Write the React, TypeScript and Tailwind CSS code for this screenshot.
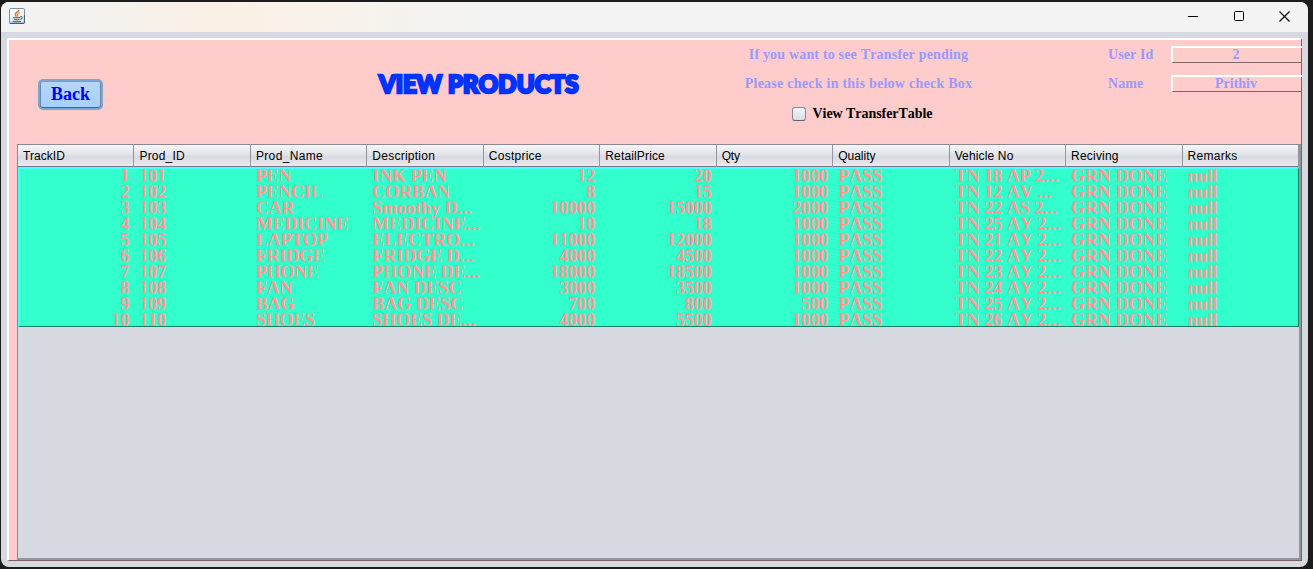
import React from "react";

const columns = [
  { name: "TrackID", right: true, tracking: "tracking-[0.05px]", cell: "tracking-[0px]" },
  { name: "Prod_ID", right: false, tracking: "tracking-[0.2px]", cell: "tracking-[-0.1px]" },
  { name: "Prod_Name", right: false, tracking: "tracking-[0.35px]", cell: "tracking-[-0.2px]" },
  { name: "Description", right: false, tracking: "tracking-[0.25px]", cell: "tracking-[-0.05px]" },
  { name: "Costprice", right: true, tracking: "tracking-[0.25px]", cell: "tracking-[0px]" },
  { name: "RetailPrice", right: true, tracking: "tracking-[0.15px]", cell: "tracking-[0px]" },
  { name: "Qty", right: true, tracking: "tracking-[-0.2px]", cell: "tracking-[0px]" },
  { name: "Quality", right: false, tracking: "tracking-[0px]", cell: "tracking-[0.1px]" },
  { name: "Vehicle No", right: false, tracking: "tracking-[0.15px]", cell: "tracking-[0px]" },
  { name: "Reciving", right: false, tracking: "tracking-[0.2px]", cell: "tracking-[0px]" },
  { name: "Remarks", right: false, tracking: "tracking-[0.3px]", cell: "tracking-[0px]" },
];

const rows = [
  ["1", "101", "PEN", "INK PEN", "12", "20", "1000", "PASS", "TN 18 AP 2...", "GRN DONE", "null"],
  ["2", "102", "PENCIL", "CORBAN", "8", "15", "1000", "PASS", "TN 12 AV ...", "GRN DONE", "null"],
  ["3", "103", "CAR", "Smoothy D...", "10000", "15000", "2000", "PASS", "TN 22 AS 2...", "GRN DONE", "null"],
  ["4", "104", "MEDICINE", "MEDICINE...", "10", "18", "1000", "PASS", "TN 25 AY 2...", "GRN DONE", "null"],
  ["5", "105", "LAPTOP", "ELECTRO...", "11000", "12000", "1000", "PASS", "TN 21 AY 2...", "GRN DONE", "null"],
  ["6", "106", "FRIDGE", "FRIDGE D...", "4000", "4500", "1000", "PASS", "TN 22 AY 2...", "GRN DONE", "null"],
  ["7", "107", "PHONE", "PHONE DE...", "18000", "18500", "1000", "PASS", "TN 23 AY 2...", "GRN DONE", "null"],
  ["8", "108", "FAN", "FAN DESC", "3000", "3500", "1000", "PASS", "TN 24 AY 2...", "GRN DONE", "null"],
  ["9", "109", "BAG", "BAG DESC", "700", "800", "500", "PASS", "TN 25 AY 2...", "GRN DONE", "null"],
  ["10", "110", "SHOES", "SHOES DE...", "4000", "5500", "1000", "PASS", "TN 26 AY 2...", "GRN DONE", "null"],
];

const serif = "font-['Liberation_Serif',serif] font-bold [font-kerning:none]";

function JavaIcon() {
  return (
    <svg width="16" height="16" viewBox="0 0 16 16" fill="none">
      <defs>
        <linearGradient id="tile" x1="0" y1="0" x2="0" y2="1">
          <stop offset="0" stopColor="#ffffff" />
          <stop offset="1" stopColor="#dfe5ea" />
        </linearGradient>
      </defs>
      <rect x="0.5" y="0.5" width="15" height="15" rx="1" fill="url(#tile)" stroke="#7891a5" />
      <path d="M0.8 15.4h14.4M15.4 7v8" stroke="#3f627c" strokeWidth="1.1" />
      <path d="M9.8 2C9.9 4 6.1 4.5 6.3 6.5c.1 1 1 1.3 1.2 2.2" stroke="#e67a24" strokeWidth="1.5" />
      <path d="M10.8 4.5c-1.7.7-2.6 1.3-2.3 2.2.2.6.6.9.1 1.9" stroke="#ee8a35" strokeWidth="1.2" />
      <path d="M4 9.7h7.3M5 11.6h5.5M3.5 13.6h8.500" stroke="#53758f" strokeWidth="1.2" />
      <path d="M11.3 8.7c2.2-.6 2.7 1.9 0 2.8" stroke="#53758f" strokeWidth="1.1" />
    </svg>
  );
}

function TitleBar() {
  return (
    <header className="flex h-[30px] shrink-0 items-center justify-between bg-[linear-gradient(90deg,#f3f3f3_0px,#f4f2ef_90px,#faf1e6_210px,#f9f2e8_290px,#f3f3f3_480px)] pl-2 pr-[18px]">
      <div className="-mt-[2px]"><JavaIcon /></div>
      <div className="-mt-[2px] flex items-center gap-[35px] text-black">
        <svg width="10" height="11" viewBox="0 0 10 11"><path d="M0 5.5h10" stroke="currentColor" /></svg>
        <svg width="11" height="11" viewBox="0 0 11 11" fill="none"><rect x="1.5" y="0.5" width="9" height="9" rx="1" stroke="currentColor" /></svg>
        <svg width="11" height="11" viewBox="0 0 11 11"><path d="M.5.5l10 10M10.5.5l-10 10" stroke="currentColor" strokeWidth="1.1" /></svg>
      </div>
    </header>
  );
}

function Field({ label, value }: { label: string; value: string }) {
  return (
    <div className="flex h-[17px] items-center">
      <span className="w-[63px] text-[14px] leading-[17px] tracking-[0.1px]">{label}</span>
      <div className="-mr-px flex h-[17px] flex-1 items-center justify-center border-b border-l-2 border-t-2 border-b-[#7f6666] border-l-white border-t-white pr-[3px] text-[14px] leading-[14px]">
        {value}
      </div>
    </div>
  );
}

function Header() {
  return (
    <div className={`flex h-[104px] shrink-0 text-[#9999ff] ${serif}`}>
      <div className="w-[370px] pl-[29px] pt-[39px]">
        <button className="flex h-[31px] w-[65px] items-center justify-center rounded-[5px] border-2 border-[#7ba6d1] bg-linear-to-b from-[#b5d6fa] to-[#a5d0ff] pb-px text-[18px] leading-none text-[#0000ff] shadow-[inset_0_1px_0_#8d9ba9,inset_0_-1px_0_#4b6178,inset_1px_0_0_#71879d,inset_-1px_0_0_#71879d]">
          Back
        </button>
      </div>
      <h1 className="flex w-[229px] gap-[6px] whitespace-nowrap pt-[29px] font-['Lato',sans-serif] text-[24px] font-black leading-[30px] text-[#0033ff] [-webkit-text-stroke:2.6px_#0033ff]">
        <span className="tracking-[-0.1px]">VIEW</span> <span className="tracking-[0.1px]">PRODUCTS</span>
      </h1>
      <div className="flex w-[501px] flex-col items-center">
        <p className="mt-[6px] h-[29px] text-[14px] leading-[17px] tracking-[0.18px]">If you want to see Transfer pending</p>
        <p className="h-[30px] text-[14px] leading-[17px] tracking-[0.25px]">Please check in this below check Box</p>
        <label className="ml-[8px] flex items-center gap-[6px] text-[14px] leading-[17px] tracking-[-0.05px] text-black">
          <span className="size-[14px] rounded-[3px] border border-[#858b92] border-b-[#5f656d] bg-linear-to-b from-[#f4f5f7] to-[#d8dbe1]" />
          View TransferTable
        </label>
      </div>
      <div className="-ml-px flex flex-1 flex-col gap-3 pt-[6px]">
        <Field label="User Id" value="2" />
        <Field label="Name" value="Prithiv" />
      </div>
    </div>
  );
}

function CellText({ value }: { value: string }) {
  if (!value.endsWith("...")) return <>{value}</>;
  return (
    <>
      {value.slice(0, -3)}
      <span className="tracking-[0.5px]">...</span>
    </>
  );
}

function ProductTable() {
  return (
    <div className="ml-2 flex flex-1 flex-col border-b-2 border-l border-r-2 border-t border-b-[#98949f] border-l-[#8f8790] border-r-[#98949f] border-t-[#8f8790] bg-[#d6d9e0]">
      <div className="grid h-[22px] w-[1281px] grid-cols-11 border-b border-[#737b87] bg-[linear-gradient(180deg,#f5f6f8_0%,#e2e4e9_45%,#d7dae0_55%,#e8eaee_100%)]">
        {columns.map((c) => (
          <div key={c.name} className={`border-r border-[#92969e] pl-[5px] font-['Liberation_Sans',sans-serif] text-[12px] leading-[22px] text-black ${c.tracking}`}>
            {c.name}
          </div>
        ))}
      </div>
      <div className={`flex h-[160px] w-[1281px] flex-col border-b border-l-2 border-r border-t-2 border-b-[#198066] border-l-[#48ffff] border-r-[#198066] border-t-[#48ffff] bg-[#33ffcc] text-[18px] text-[#ff9999] ${serif}`}>
        <div className="-ml-[2px] -mt-px w-[1281px]">
          {rows.map((r) => (
            <div key={r[0]} className="grid h-4 grid-cols-11">
              {r.map((v, i) => (
                <div key={columns[i].name} className={`whitespace-nowrap px-[5px] leading-4 ${columns[i].cell} ${columns[i].right ? "text-right" : "text-left"}`}>
                  <CellText value={v} />
                </div>
              ))}
            </div>
          ))}
        </div>
      </div>
    </div>
  );
}

export default function App() {
  return (
    <div className="h-[569px] w-[1313px] overflow-hidden bg-[#1c1c1c] pl-px pt-[2px]">
      <div className="flex h-[565px] w-[1307px] flex-col overflow-hidden rounded-lg bg-[#d6d9e0]">
        <TitleBar />
        <main className="m-[6px] flex flex-1 flex-col border-b border-l-2 border-r border-t-2 border-b-[#7f6060] border-l-white border-r-[#7f6060] border-t-white bg-[#ffcccc]">
          <Header />
          <ProductTable />
        </main>
      </div>
    </div>
  );
}
